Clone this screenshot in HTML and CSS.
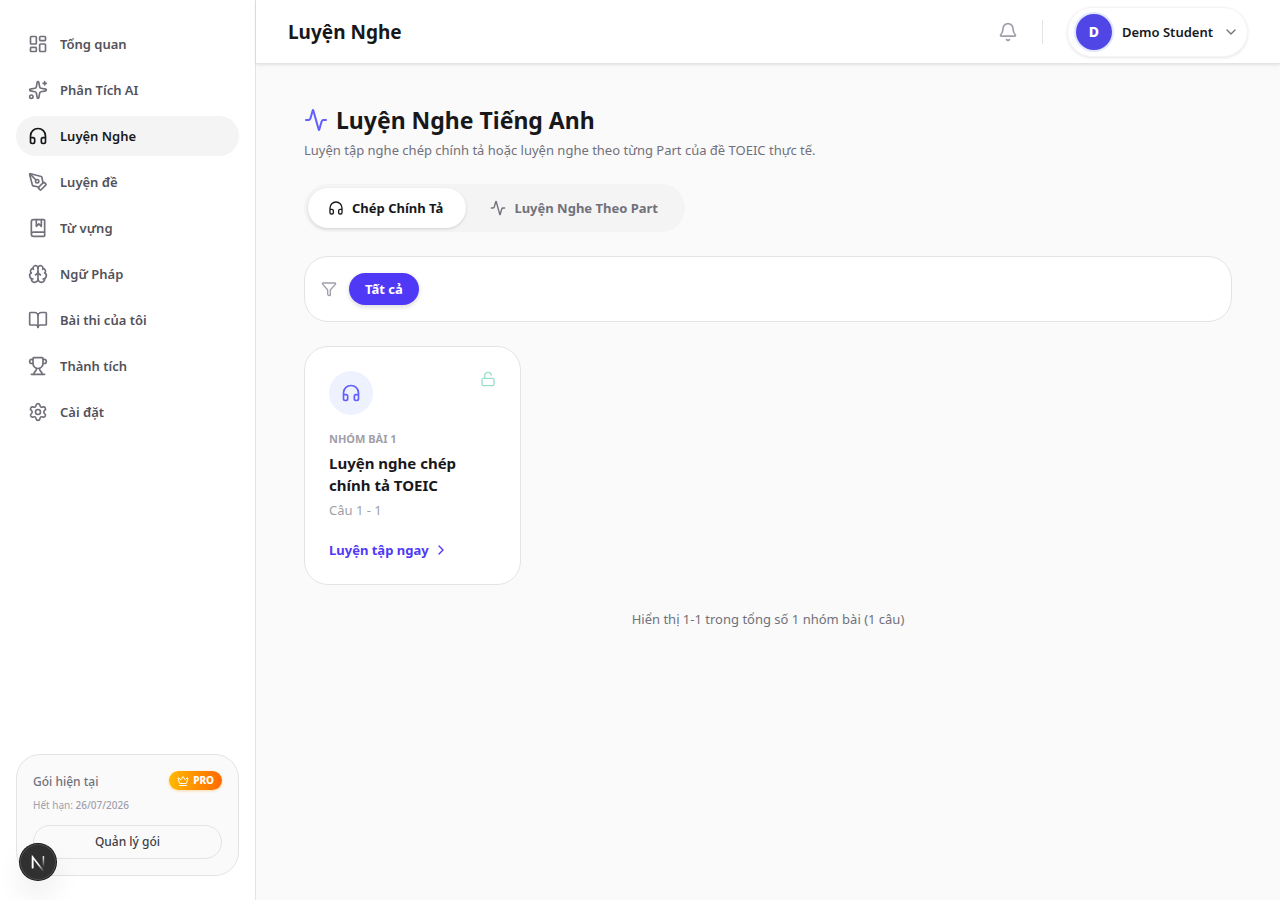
FILE: index.html
```html
<!DOCTYPE html>
<html lang="vi">

<head>
  <meta charset="UTF-8">
  <meta name="viewport" content="width=device-width, initial-scale=1.0">
  <title>Luyện Nghe</title>
  <link rel="stylesheet" href="styles.css">
</head>

<body>
  <!-- shared icons -->
  <svg class="sprite" aria-hidden="true">
    <symbol id="icon-headphones" viewBox="0 0 24 24">
      <path d="M3 14h3a2 2 0 0 1 2 2v3a2 2 0 0 1-2 2H5a2 2 0 0 1-2-2v-7a9 9 0 0 1 18 0v7a2 2 0 0 1-2 2h-1a2 2 0 0 1-2-2v-3a2 2 0 0 1 2-2h3" />
    </symbol>
    <symbol id="icon-activity" viewBox="0 0 24 24">
      <path d="M22 12h-2.48a2 2 0 0 0-1.93 1.46l-2.35 8.36a.25.25 0 0 1-.48 0L9.24 2.18a.25.25 0 0 0-.48 0l-2.35 8.36A2 2 0 0 1 4.49 12H2" />
    </symbol>
  </svg>

  <div class="layout">
    <aside class="sidebar">
      <nav class="menu">
        <a href="#" class="menu-item">
          <svg class="icon" viewBox="0 0 24 24">
            <rect width="7" height="9" x="3" y="3" rx="1" />
            <rect width="7" height="5" x="14" y="3" rx="1" />
            <rect width="7" height="9" x="14" y="12" rx="1" />
            <rect width="7" height="5" x="3" y="16" rx="1" />
          </svg>
          Tổng quan
        </a>
        <a href="#" class="menu-item">
          <svg class="icon" viewBox="0 0 24 24">
            <path d="M11.017 2.814a1 1 0 0 1 1.966 0l1.051 5.558a2 2 0 0 0 1.594 1.594l5.558 1.051a1 1 0 0 1 0 1.966l-5.558 1.051a2 2 0 0 0-1.594 1.594l-1.051 5.558a1 1 0 0 1-1.966 0l-1.051-5.558a2 2 0 0 0-1.594-1.594l-5.558-1.051a1 1 0 0 1 0-1.966l5.558-1.051a2 2 0 0 0 1.594-1.594z" />
            <path d="M20 2v4" />
            <path d="M22 4h-4" />
            <circle cx="4" cy="20" r="2" />
          </svg>
          Phân Tích AI
        </a>
        <a href="#" class="menu-item active">
          <svg class="icon"><use href="#icon-headphones" /></svg>
          Luyện Nghe
        </a>
        <a href="#" class="menu-item">
          <svg class="icon" viewBox="0 0 24 24">
            <path d="M15.707 21.293a1 1 0 0 1-1.414 0l-1.586-1.586a1 1 0 0 1 0-1.414l5.586-5.586a1 1 0 0 1 1.414 0l1.586 1.586a1 1 0 0 1 0 1.414z" />
            <path d="m18 13-1.375-6.874a1 1 0 0 0-.746-.776L3.235 2.028a1 1 0 0 0-1.207 1.207L5.35 15.879a1 1 0 0 0 .776.746L13 18" />
            <path d="m2.3 2.3 7.286 7.286" />
            <circle cx="11" cy="11" r="2" />
          </svg>
          Luyện đề
        </a>
        <a href="#" class="menu-item">
          <svg class="icon" viewBox="0 0 24 24">
            <path d="M10 2v8l3-3 3 3V2" />
            <path d="M4 19.5v-15A2.5 2.5 0 0 1 6.500 2H19a1 1 0 0 1 1 1v18a1 1 0 0 1-1 1H6.500a1 1 0 0 1 0-5H20" />
          </svg>
          Từ vựng
        </a>
        <a href="#" class="menu-item">
          <svg class="icon" viewBox="0 0 24 24">
            <path d="M12 18V5" />
            <path d="M15 13a4.170 4.170 0 0 1-3-4 4.170 4.170 0 0 1-3 4" />
            <path d="M17.598 6.500A3 3 0 1 0 12 5a3 3 0 1 0-5.598 1.500" />
            <path d="M17.997 5.125a4 4 0 0 1 2.526 5.770" />
            <path d="M18 18a4 4 0 0 0 2-7.464" />
            <path d="M19.967 17.483A4 4 0 1 1 12 18a4 4 0 1 1-7.967-.517" />
            <path d="M6 18a4 4 0 0 1-2-7.464" />
            <path d="M6.003 5.125a4 4 0 0 0-2.526 5.770" />
          </svg>
          Ngữ Pháp
        </a>
        <a href="#" class="menu-item">
          <svg class="icon" viewBox="0 0 24 24">
            <path d="M12 7v14" />
            <path d="M3 18a1 1 0 0 1-1-1V4a1 1 0 0 1 1-1h5a4 4 0 0 1 4 4 4 4 0 0 1 4-4h5a1 1 0 0 1 1 1v13a1 1 0 0 1-1 1h-6a3 3 0 0 0-3 3 3 3 0 0 0-3-3z" />
          </svg>
          Bài thi của tôi
        </a>
        <a href="#" class="menu-item">
          <svg class="icon" viewBox="0 0 24 24">
            <path d="M10 14.660v1.626a2 2 0 0 1-.976 1.696A5 5 0 0 0 7 21.978" />
            <path d="M14 14.660v1.626a2 2 0 0 0 .976 1.696A5 5 0 0 1 17 21.978" />
            <path d="M18 9h1.500a1 1 0 0 0 0-5H18" />
            <path d="M4 22h16" />
            <path d="M6 9a6 6 0 0 0 12 0V3a1 1 0 0 0-1-1H7a1 1 0 0 0-1 1z" />
            <path d="M6 9H4.500a1 1 0 0 1 0-5H6" />
          </svg>
          Thành tích
        </a>
        <a href="#" class="menu-item">
          <svg class="icon" viewBox="0 0 24 24">
            <path d="M9.671 4.136a2.340 2.340 0 0 1 4.659 0 2.340 2.340 0 0 0 3.319 1.915 2.340 2.340 0 0 1 2.330 4.033 2.340 2.340 0 0 0 0 3.831 2.340 2.340 0 0 1-2.330 4.033 2.340 2.340 0 0 0-3.319 1.915 2.340 2.340 0 0 1-4.659 0 2.340 2.340 0 0 0-3.320-1.915 2.340 2.340 0 0 1-2.330-4.033 2.340 2.340 0 0 0 0-3.831A2.340 2.340 0 0 1 6.350 6.051a2.340 2.340 0 0 0 3.319-1.915" />
            <circle cx="12" cy="12" r="3" />
          </svg>
          Cài đặt
        </a>
      </nav>

      <div class="plan">
        <div class="plan-top">
          <span class="plan-label">Gói hiện tại</span>
          <span class="plan-badge">
            <svg class="icon" viewBox="0 0 24 24">
              <path d="M11.562 3.266a.5.5 0 0 1 .876 0L15.390 8.870a1 1 0 0 0 1.516.294L21.183 5.500a.5.5 0 0 1 .798.519l-2.834 10.246a1 1 0 0 1-.956.734H5.810a1 1 0 0 1-.957-.734L2.020 6.020a.5.5 0 0 1 .798-.519l4.276 3.664a1 1 0 0 0 1.516-.294z" />
              <path d="M5 21h14" />
            </svg>
            PRO
          </span>
        </div>
        <p class="plan-expiry">Hết hạn: <b>26/07/2026</b></p>
        <button type="button" class="plan-button">Quản lý gói</button>
      </div>
    </aside>

    <div class="content">
      <header class="topbar">
        <h2 class="topbar-title">Luyện Nghe</h2>
        <div class="topbar-right">
          <button type="button" class="bell" aria-label="Thông báo">
            <svg class="icon" viewBox="0 0 24 24">
              <path d="M10.268 21a2 2 0 0 0 3.464 0" />
              <path d="M3.262 15.326A1 1 0 0 0 4 17h16a1 1 0 0 0 .740-1.673C19.410 13.956 18 12.499 18 8A6 6 0 0 0 6 8c0 4.499-1.411 5.956-2.738 7.326" />
            </svg>
          </button>
          <span class="divider"></span>
          <button type="button" class="user">
            <span class="avatar">D</span>
            <span class="user-name">Demo Student</span>
            <svg class="icon" viewBox="0 0 24 24"><path d="m6 9 6 6 6-6" /></svg>
          </button>
        </div>
      </header>

      <main class="main">
        <h1 class="title">
          <svg class="icon"><use href="#icon-activity" /></svg>
          Luyện Nghe Tiếng Anh
        </h1>
        <p class="subtitle">Luyện tập nghe chép chính tả hoặc luyện nghe theo từng Part của đề TOEIC thực tế.</p>

        <div class="tabs">
          <button type="button" class="tab active">
            <svg class="icon"><use href="#icon-headphones" /></svg>
            Chép Chính Tả
          </button>
          <button type="button" class="tab">
            <svg class="icon"><use href="#icon-activity" /></svg>
            Luyện Nghe Theo Part
          </button>
        </div>

        <div class="filter">
          <svg class="icon" viewBox="0 0 24 24">
            <path d="M10 20a1 1 0 0 0 .553.895l2 1A1 1 0 0 0 14 21v-7a2 2 0 0 1 .517-1.341L21.740 4.670A1 1 0 0 0 21 3H3a1 1 0 0 0-.742 1.670l7.225 7.989A2 2 0 0 1 10 14z" />
          </svg>
          <button type="button" class="filter-button">Tất cả</button>
        </div>

        <div class="cards">
          <a href="#" class="card">
            <div class="card-top">
              <span class="card-icon">
                <svg class="icon"><use href="#icon-headphones" /></svg>
              </span>
              <svg class="icon lock" viewBox="0 0 24 24">
                <rect width="18" height="11" x="3" y="11" rx="2" ry="2" />
                <path d="M7 11V7a5 5 0 0 1 9.900-1" />
              </svg>
            </div>
            <span class="card-group">NHÓM BÀI 1</span>
            <h3 class="card-title">Luyện nghe chép chính tả TOEIC</h3>
            <span class="card-range">Câu 1 - 1</span>
            <span class="card-link">
              Luyện tập ngay
              <svg class="icon" viewBox="0 0 24 24"><path d="m9 18 6-6-6-6" /></svg>
            </span>
          </a>
        </div>

        <p class="summary">Hiển thị 1-1 trong tổng số 1 nhóm bài (1 câu)</p>
      </main>
    </div>
  </div>

  <button type="button" class="dev-button" aria-label="Dev Tools">
    <svg viewBox="0 0 40 40" fill="none">
      <defs>
        <linearGradient id="fade-diagonal" x1="21" y1="22" x2="27" y2="30" gradientUnits="userSpaceOnUse">
          <stop stop-color="#fff" />
          <stop offset="1" stop-color="#fff" stop-opacity="0" />
        </linearGradient>
        <linearGradient id="fade-stem" x1="26" y1="13" x2="26" y2="26" gradientUnits="userSpaceOnUse">
          <stop stop-color="#fff" />
          <stop offset="1" stop-color="#fff" stop-opacity="0" />
        </linearGradient>
      </defs>
      <path d="M14 27V14.500L26 30" stroke="url(#fade-diagonal)" stroke-width="1.700" />
      <path d="M14 27V14" stroke="#fff" stroke-width="1.700" />
      <path d="M26 13.500v13" stroke="url(#fade-stem)" stroke-width="1.700" />
    </svg>
  </button>
</body>

</html>
```
FILE: styles.css
```css
* {
  box-sizing: border-box;
}

body {
  margin: 0;
  font-family: "Noto Sans", "Open Sans", sans-serif;
  font-size: 14px;
  line-height: 20px;
  color: #18181b;
  background-color: #fafafa;
}

h1,
h2,
h3,
p {
  margin: 0;
}

a {
  color: inherit;
  text-decoration: none;
}

button {
  font: inherit;
  color: inherit;
  background: none;
  border: none;
  padding: 0;
  cursor: pointer;
}

.sprite {
  display: none;
}

.icon {
  width: 16px;
  height: 16px;
  flex-shrink: 0;
  fill: none;
  stroke: currentColor;
  stroke-width: 2;
  stroke-linecap: round;
  stroke-linejoin: round;
}

.layout {
  display: flex;
  min-height: 100vh;
}

/* Sidebar */

.sidebar {
  width: 256px;
  flex-shrink: 0;
  display: flex;
  flex-direction: column;
  justify-content: space-between;
  padding: 24px 16px;
  background-color: #fff;
  border-right: 1px solid #e4e4e7;
}

.menu {
  display: flex;
  flex-direction: column;
  gap: 6px;
}

.menu-item {
  display: flex;
  align-items: center;
  gap: 12px;
  padding: 10px 12px;
  border-radius: 20px;
  font-size: 13px;
  font-weight: 600;
  color: #52525b;
}

.menu-item .icon {
  width: 20px;
  height: 20px;
  color: #71717b;
}

.menu-item.active,
.menu-item.active .icon {
  color: #18181b;
}

.menu-item.active {
  background-color: #f4f4f5;
}

.plan {
  padding: 16px;
  border: 1px solid #e4e4e7;
  border-radius: 24px;
  background-color: #fafafa;
}

.plan-top {
  display: flex;
  align-items: flex-start;
  justify-content: space-between;
}

.plan-label {
  font-size: 12px;
  line-height: 22px;
  font-weight: 500;
  color: #71717b;
}

.plan-badge {
  display: flex;
  align-items: center;
  gap: 4px;
  padding: 2px 8px;
  border-radius: 10px;
  font-size: 10px;
  line-height: 15px;
  font-weight: 800;
  color: #fff;
  background: linear-gradient(90deg, #ffb900, #ff6900);
  box-shadow: 0 1px 3px #ffd6a8;
}

.plan-badge .icon {
  width: 12px;
  height: 12px;
}

.plan-expiry {
  margin: 4px 0 12px;
  font-size: 10px;
  line-height: 16px;
  color: #9f9fa9;
}

.plan-expiry b {
  font-weight: 500;
}

.plan-button {
  width: 100%;
  height: 34px;
  border: 1px solid #e4e4e7;
  border-radius: 17px;
  font-size: 12px;
  font-weight: 500;
  color: #3f3f46;
}

/* Header */

.content {
  flex: 1;
  min-width: 0;
}

.topbar {
  display: flex;
  align-items: center;
  justify-content: space-between;
  height: 64px;
  padding: 0 32px;
  background-color: #fff;
  border-bottom: 1px solid #e4e4e7;
  box-shadow: 0 1px 3px rgba(0, 0, 0, 0.1);
}

.topbar-title {
  font-size: 19px;
  line-height: 28px;
  font-weight: 700;
}

.topbar-right {
  display: flex;
  align-items: center;
  gap: 24px;
}

.bell {
  display: flex;
  color: #9f9fa9;
}

.bell .icon {
  width: 20px;
  height: 20px;
}

.divider {
  width: 1px;
  height: 24px;
  background-color: #e4e4e7;
}

.user {
  display: flex;
  align-items: center;
  gap: 10px;
  height: 50px;
  padding: 0 8px;
  border: 1px solid #f4f4f5;
  border-radius: 25px;
  background-color: #fff;
  box-shadow: 0 1px 3px rgba(0, 0, 0, 0.1);
}

.user .icon {
  color: #71717b;
}

.user-name {
  font-size: 13px;
  font-weight: 600;
}

.avatar {
  display: flex;
  align-items: center;
  justify-content: center;
  width: 36px;
  height: 36px;
  border-radius: 50%;
  font-weight: 800;
  color: #fff;
  background-color: #4f46e5;
  box-shadow: 0 0 0 2px #e0e7ff;
}

/* Page */

.main {
  padding: 40px 48px;
}

.title {
  display: flex;
  align-items: center;
  gap: 8px;
  font-size: 23px;
  line-height: 32px;
  font-weight: 700;
}

.title .icon {
  width: 24px;
  height: 24px;
  color: #615fff;
}

.subtitle {
  margin-top: 4px;
  font-size: 13px;
  color: #71717b;
}

.tabs {
  display: inline-flex;
  gap: 4px;
  margin-top: 24px;
  padding: 4px;
  border-radius: 24px;
  background-color: #f4f4f5;
}

.tab {
  display: flex;
  align-items: center;
  gap: 8px;
  height: 40px;
  padding: 0 23px 0 20px;
  border-radius: 20px;
  font-size: 13px;
  font-weight: 700;
  color: #71717b;
}

.tab.active {
  color: #18181b;
  background-color: #fff;
  box-shadow: 0 1px 3px rgba(0, 0, 0, 0.15);
}

.filter {
  display: flex;
  align-items: center;
  gap: 12px;
  margin-top: 24px;
  padding: 16px;
  border: 1px solid #e4e4e7;
  border-radius: 24px;
  background-color: #fff;
}

.filter .icon {
  color: #9f9fa9;
}

.filter-button {
  height: 32px;
  padding: 0 16px;
  border-radius: 16px;
  font-size: 13px;
  font-weight: 700;
  color: #fff;
  background-color: #4f39f6;
  box-shadow: 0 2px 5px rgba(0, 0, 0, 0.15);
}

.cards {
  display: grid;
  grid-template-columns: repeat(4, 1fr);
  gap: 20px;
  margin-top: 24px;
}

.card {
  display: flex;
  flex-direction: column;
  padding: 24px;
  border: 1px solid #e4e4e7;
  border-radius: 24px;
  background-color: #fff;
}

.card-top {
  display: flex;
  justify-content: space-between;
  margin-bottom: 16px;
}

.card-icon {
  display: flex;
  align-items: center;
  justify-content: center;
  width: 44px;
  height: 44px;
  border-radius: 50%;
  color: #615fff;
  background-color: #eef2ff;
}

.card-icon .icon {
  width: 20px;
  height: 20px;
}

.lock {
  color: #99e0cc;
}

.card-group {
  font-size: 11px;
  line-height: 16px;
  font-weight: 700;
  color: #9f9fa9;
}

.card-title {
  margin: 5px 0;
  font-size: 15px;
  line-height: 22px;
  font-weight: 700;
}

.card-range {
  font-size: 13px;
  line-height: 18px;
  color: #9f9fa9;
}

.card-link {
  display: flex;
  align-items: center;
  gap: 4px;
  margin-top: 21px;
  font-size: 13px;
  font-weight: 700;
  color: #4f39f6;
}

.summary {
  margin-top: 24px;
  font-size: 13px;
  text-align: center;
  color: #71717b;
}

/* Floating button over the sidebar */

.dev-button {
  position: fixed;
  left: 20px;
  bottom: 20px;
  width: 36px;
  height: 36px;
  border-radius: 50%;
  background-color: #303030;
  box-shadow: 0 0 0 1px #171717, inset 0 0 0 1px #4a4a4a, 0 16px 32px -8px rgba(0, 0, 0, 0.24);
}

.dev-button svg {
  display: block;
  width: 36px;
  height: 36px;
}
```
